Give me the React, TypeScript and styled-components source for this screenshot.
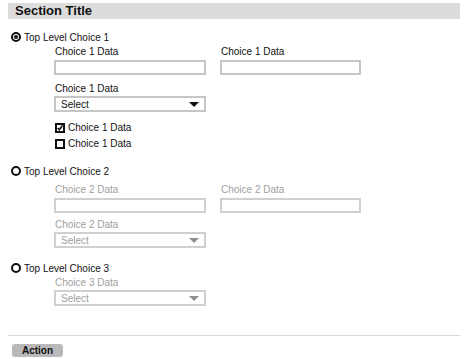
import React from 'react';
import styled, { createGlobalStyle } from 'styled-components';

const GlobalStyle = createGlobalStyle`
  body {
    margin: 0;
    background: #ffffff;
    font-family: "Liberation Sans", Arial, sans-serif;
    color: #111;
  }
`;

const Page = styled.div`
  width: 452px;
  padding: 3px 0 0 8px;
`;

const TitleBar = styled.div`
  height: 16px;
  background: #dcdcdc;
  padding-left: 7px;
  font-size: 13px;
  font-weight: bold;
  line-height: 16px;
`;

const Group = styled.div<{ $top: number }>`
  margin-top: ${p => p.$top}px;
`;

const RadioRow = styled.label`
  display: flex;
  align-items: center;
  gap: 3px;
  height: 12px;
  padding-left: 3px;
  font-size: 10px;
`;

const RadioMark = styled.span<{ $checked?: boolean }>`
  width: 10px;
  height: 10px;
  box-sizing: border-box;
  border: 2px solid #111;
  border-radius: 50%;
  display: flex;
  align-items: center;
  justify-content: center;
  &::after {
    content: '';
    width: 4px;
    height: 4px;
    border-radius: 50%;
    background: ${p => (p.$checked ? '#111' : 'transparent')};
  }
`;

const Fields = styled.div`
  padding-left: 46px;
`;

const FieldRow = styled.div<{ $top: number }>`
  display: flex;
  gap: 14px;
  margin-top: ${p => p.$top}px;
`;

const Field = styled.div<{ $width: number }>`
  width: ${p => p.$width}px;
  display: flex;
  flex-direction: column;
`;

const Label = styled.div<{ $disabled?: boolean }>`
  font-size: 10px;
  line-height: 12px;
  height: 12px;
  padding-left: 1px;
  color: ${p => (p.$disabled ? '#a0a0a0' : '#111')};
`;

const TextBox = styled.div<{ $disabled?: boolean }>`
  margin-top: 2px;
  height: 15px;
  box-sizing: border-box;
  border: 2px solid ${p => (p.$disabled ? '#d0d0d0' : '#c6c6c6')};
  background: #fff;
`;

const SelectBox = styled.div<{ $disabled?: boolean }>`
  margin-top: 1px;
  height: 16px;
  box-sizing: border-box;
  border: 2px solid ${p => (p.$disabled ? '#d0d0d0' : '#c6c6c6')};
  display: flex;
  align-items: center;
  justify-content: space-between;
  padding: 0 5px 0 5px;
  font-size: 10px;
  color: ${p => (p.$disabled ? '#a0a0a0' : '#111')};
`;

const Arrow = styled.span<{ $disabled?: boolean }>`
  width: 0;
  height: 0;
  border-left: 5px solid transparent;
  border-right: 5px solid transparent;
  border-top: 5px solid ${p => (p.$disabled ? '#909090' : '#111')};
`;

const CheckList = styled.div`
  margin-top: 10px;
  display: flex;
  flex-direction: column;
  gap: 5px;
`;

const CheckRow = styled.div`
  display: flex;
  align-items: center;
  gap: 3px;
  height: 11px;
  padding-left: 1px;
  font-size: 10px;
`;

const CheckMark = styled.span`
  width: 10px;
  height: 10px;
  box-sizing: border-box;
  border: 2px solid #111;
  display: flex;
  align-items: center;
  justify-content: center;
`;

const Divider = styled.div`
  margin-top: 29px;
  height: 1px;
  background: #d8d8d8;
`;

const ActionButton = styled.button`
  display: block;
  margin: 8px 0 0 4px;
  width: 51px;
  height: 13px;
  padding: 0;
  border: none;
  border-radius: 3px;
  background: #b9b9b9;
  font-family: "Liberation Sans", Arial, sans-serif;
  font-size: 10px;
  font-weight: bold;
  line-height: 13px;
  color: #111;
`;

const Select = ({ disabled }: { disabled?: boolean }) => (
  <SelectBox $disabled={disabled}>
    <span>Select</span>
    <Arrow $disabled={disabled} />
  </SelectBox>
);

const App = () => (
  <Page>
    <GlobalStyle />
    <TitleBar>Section Title</TitleBar>

    <Group $top={12}>
      <RadioRow>
        <RadioMark $checked />
        Top Level Choice 1
      </RadioRow>
      <Fields>
        <FieldRow $top={3}>
          <Field $width={152}>
            <Label>Choice 1 Data</Label>
            <TextBox />
          </Field>
          <Field $width={141}>
            <Label>Choice 1 Data</Label>
            <TextBox />
          </Field>
        </FieldRow>
        <FieldRow $top={8}>
          <Field $width={152}>
            <Label>Choice 1 Data</Label>
            <Select />
          </Field>
        </FieldRow>
        <CheckList>
          <CheckRow>
            <CheckMark>
              <svg width="8" height="8" viewBox="0 0 8 8">
                <path d="M1 4 L3.2 6.4 L7.2 0.6" stroke="#111" strokeWidth="2.2" fill="none" />
              </svg>
            </CheckMark>
            Choice 1 Data
          </CheckRow>
          <CheckRow>
            <CheckMark />
            Choice 1 Data
          </CheckRow>
        </CheckList>
      </Fields>
    </Group>

    <Group $top={16}>
      <RadioRow>
        <RadioMark />
        Top Level Choice 2
      </RadioRow>
      <Fields>
        <FieldRow $top={7}>
          <Field $width={152}>
            <Label $disabled>Choice 2 Data</Label>
            <TextBox $disabled />
          </Field>
          <Field $width={141}>
            <Label $disabled>Choice 2 Data</Label>
            <TextBox $disabled />
          </Field>
        </FieldRow>
        <FieldRow $top={6}>
          <Field $width={152}>
            <Label $disabled>Choice 2 Data</Label>
            <Select disabled />
          </Field>
        </FieldRow>
      </Fields>
    </Group>

    <Group $top={14}>
      <RadioRow>
        <RadioMark />
        Top Level Choice 3
      </RadioRow>
      <Fields>
        <FieldRow $top={3}>
          <Field $width={152}>
            <Label $disabled>Choice 3 Data</Label>
            <Select disabled />
          </Field>
        </FieldRow>
      </Fields>
    </Group>

    <Divider />
    <ActionButton>Action</ActionButton>
  </Page>
);

export default App;
